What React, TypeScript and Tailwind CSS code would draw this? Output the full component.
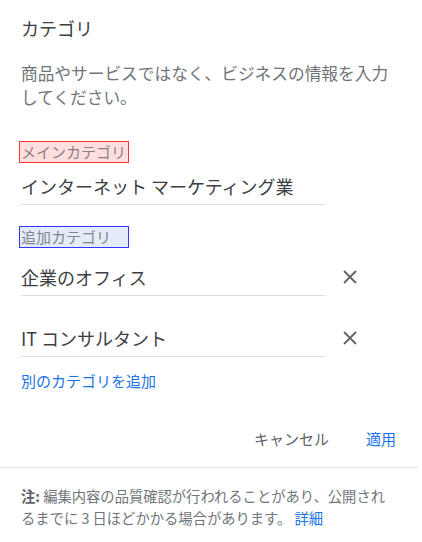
import React from "react";

const font = { fontFamily: '"Noto Sans CJK JP", "Noto Sans", sans-serif' };

function XIcon() {
  return (
    <svg width="14" height="14" viewBox="0 0 14 14" className="text-[#5f6368]">
      <path d="M1 1L13 13M13 1L1 13" stroke="currentColor" strokeWidth="1.8" />
    </svg>
  );
}

function Field({ text, remove, mt, pb }: { text: string; remove?: boolean; mt: string; pb: string }) {
  return (
    <div className={`flex items-start ${mt}`}>
      <div className={`w-[304px] border-b border-[#dadce0] ${pb} text-[18px] leading-[24px] text-[#3c4043]`}>{text}</div>
      {remove && (
        <div className="ml-[18px] flex h-[24px] items-center">
          <XIcon />
        </div>
      )}
    </div>
  );
}

export default function App() {
  return (
    <div className="w-[422px] h-[542px] bg-white overflow-hidden" style={font}>
      <div className="pl-[21px]">
        <div className="pt-[16px] text-[18px] leading-[24px] text-[#3c4043]">カテゴリ</div>
        <div className="mt-[21px] w-[380px] text-[16.7px] leading-[24px] text-[#70757a]">
          商品やサービスではなく、ビジネスの情報を入力してください。
        </div>
        <div className="mt-[32px] -ml-[2px] flex">
          <div className="h-[22px] w-[110px] border border-[#ff3333] bg-[#ffdede] pl-[1px] text-[15px] leading-[20px] text-[#8a8084]">
            メインカテゴリ
          </div>
        </div>
        <Field text="インターネット マーケティング業" mt="mt-[11px]" pb="pb-[6px]" />
        <div className="mt-[21px] -ml-[2px] flex">
          <div className="h-[22px] w-[110px] border border-[#3333ff] bg-[#e4ecfa] pl-[1px] text-[15px] leading-[20px] text-[#80868b]">
            追加カテゴリ
          </div>
        </div>
        <Field text="企業のオフィス" remove mt="mt-[17px]" pb="pb-[6px]" />
        <Field text="IT コンサルタント" remove mt="mt-[30px]" pb="pb-[6px]" />
        <div className="mt-[14px] text-[15px] leading-[20px] text-[#1a73e8]">別のカテゴリを追加</div>
        <div className="mt-[38px] flex justify-end pr-[26px] text-[15px] leading-[20px]">
          <span className="text-[#5f6368]">キャンセル</span>
          <span className="ml-[37px] text-[#1a73e8]">適用</span>
        </div>
      </div>
      <div className="mt-[18px] w-[418px] border-t border-[#e0e0e0]" />
      <div className="mt-[17px] ml-[21px] w-[372px] text-[14.3px] leading-[22px] text-[#70757a]">
        <span className="font-bold text-[#5f6368]">注:</span> 編集内容の品質確認が行われることがあり、公開されるまでに 3 日ほどかかる場合があります。 <span className="text-[#1a73e8]">詳細</span>
      </div>
    </div>
  );
}
